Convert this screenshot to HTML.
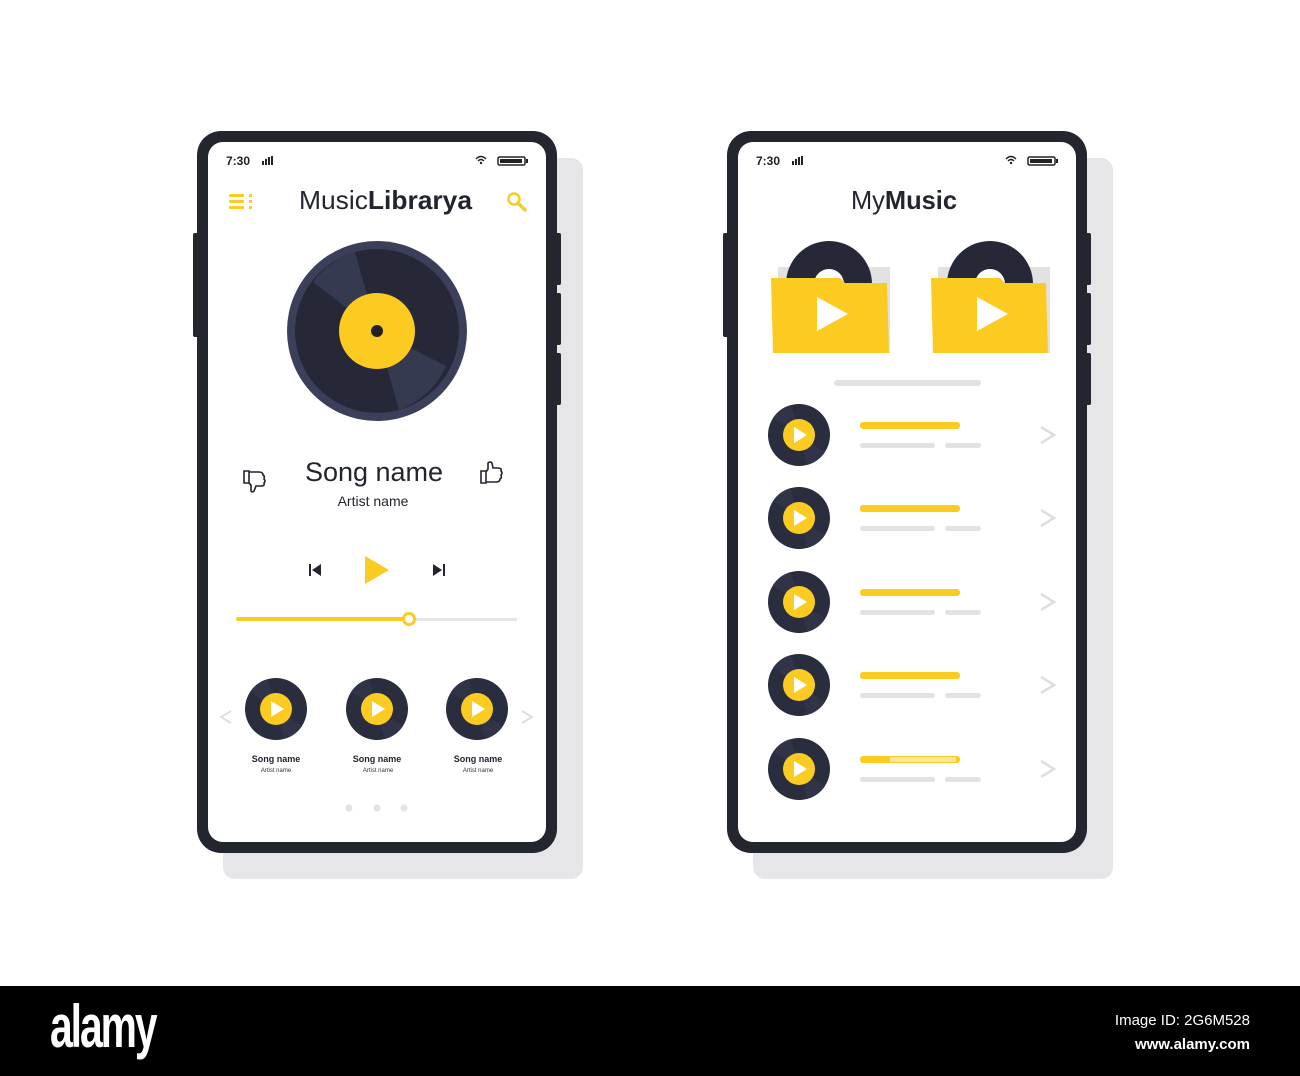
<!DOCTYPE html>
<html><head><meta charset="utf-8"><style>
html,body{margin:0;padding:0;background:#fff;}
body{width:1300px;height:1076px;position:relative;overflow:hidden;font-family:"Liberation Sans",sans-serif;}
svg{position:absolute;left:0;top:0}
.bar{position:absolute;left:0;top:986px;width:1300px;height:90px;background:#000;}
</style></head><body>
<svg width="1300" height="1076" viewBox="0 0 1300 1076" font-family="Liberation Sans, sans-serif">
<defs>
<g id="mini">
 <circle r="31" fill="#2a2d3d"/>
 <path d="M0 0 L-26 -17 A31 31 0 0 1 -8 -30 Z" fill="#313446"/>
 <path d="M0 0 L26 17 A31 31 0 0 1 8 30 Z" fill="#313446"/>
 <circle r="16" fill="#fccb22"/>
 <path d="M-5 -8 L8 0 L-5 8 Z" fill="#fff"/>
</g>
<g id="chev"><path d="M0 0 L13 8 L0 16" fill="none" stroke="#dedede" stroke-width="2.5"/></g>
</defs>

<!-- LEFT PHONE -->
<rect x="223" y="158" width="360" height="721" rx="12" fill="#e6e6e8"/>
<rect x="193" y="233" width="6" height="104" rx="2" fill="#24262f"/>
<rect x="555" y="233" width="6" height="52" rx="2" fill="#24262f"/>
<rect x="555" y="293" width="6" height="52" rx="2" fill="#24262f"/>
<rect x="555" y="353" width="6" height="52" rx="2" fill="#24262f"/>
<rect x="197" y="131" width="360" height="722" rx="24" fill="#24262f"/>
<rect x="208" y="142" width="338" height="700" rx="15" fill="#fff"/>
<text x="226" y="165" font-size="12" font-weight="bold" fill="#222">7:30</text>
<g fill="#222"><rect x="262" y="161" width="2" height="4"/><rect x="265" y="159" width="2" height="6"/><rect x="268" y="157" width="2" height="8"/><rect x="271" y="156" width="2" height="9"/></g>
<path d="M476 159 Q481 154 486 159 M478 161 Q481 158 484 161" fill="none" stroke="#222" stroke-width="1.3"/><circle cx="481" cy="163" r="1.2" fill="#222"/>
<rect x="498" y="157" width="27" height="8" rx="1.5" fill="none" stroke="#222" stroke-width="1.5"/><rect x="500" y="159" width="22" height="4" fill="#222"/><rect x="526" y="159" width="2" height="4" fill="#222"/>
<g fill="#fccb22"><rect x="229" y="194" width="15" height="3" rx="1"/><rect x="229" y="200" width="15" height="3" rx="1"/><rect x="229" y="206" width="15" height="3" rx="1"/><rect x="249" y="194" width="3" height="3"/><rect x="249" y="200" width="3" height="3"/><rect x="249" y="206" width="3" height="3"/></g>
<text x="299" y="209" font-size="26" fill="#22242f" textLength="173" lengthAdjust="spacingAndGlyphs">Music<tspan font-weight="bold">Librarya</tspan></text>
<circle cx="514" cy="199" r="5.5" fill="none" stroke="#fccb22" stroke-width="2.5"/><path d="M518 203 L525 210" stroke="#fccb22" stroke-width="3.5" stroke-linecap="round"/>
<!-- vinyl -->
<circle cx="377" cy="331" r="90" fill="#3c3f5a"/>
<circle cx="377" cy="331" r="82" fill="#262838"/>
<path d="M377 331 L313 282 A82 82 0 0 1 355 252 Z" fill="#363a50"/>
<path d="M377 331 L446 366 A82 82 0 0 1 399 410 Z" fill="#363a50"/>
<circle cx="377" cy="331" r="38" fill="#fccb22"/>
<circle cx="377" cy="331" r="6" fill="#222"/>
<text x="374" y="481" font-size="27" fill="#22242f" text-anchor="middle">Song name</text>
<text x="373" y="506" font-size="14" fill="#22242f" text-anchor="middle">Artist name</text>
<!-- thumbs -->
<path d="M244 471 h5 v12 h-5 z M249 472 h10 q4 0 4 3 q2 1 1 4 q2 2 0 4 q1 3-3 3 h-5 l-2 5 q-2 2-3 0 l0-6 l-2-2" fill="none" stroke="#22242f" stroke-width="1.6"/>
<path d="M481 471 h5 v12 h-5 z M486 482 h10 q4 0 4-3 q2-1 1-4 q2-2 0-4 q1-3-3-3 h-5 l-1-5 q-2-2-4 0 l0 6 l-2 3" fill="none" stroke="#22242f" stroke-width="1.6"/>
<!-- controls -->
<path d="M309 564 h2 v12 h-2z M321 564 v12 l-9 -6z" fill="#22242f"/>
<path d="M365 556 L389 570 L365 584 Z" fill="#fccb22"/>
<path d="M433 564 v12 l9 -6z M443 564 h2 v12 h-2z" fill="#22242f"/>
<rect x="236" y="617" width="173" height="4" rx="2" fill="#fccb22"/>
<rect x="409" y="618" width="108" height="3" fill="#e4e4e4"/>
<circle cx="409" cy="619" r="5.5" fill="#fff" stroke="#fccb22" stroke-width="3"/>
<!-- minis -->
<use href="#mini" x="276" y="709"/><use href="#mini" x="377" y="709"/><use href="#mini" x="477" y="709"/>
<path d="M231 711 L221 717 L231 723" fill="none" stroke="#dedede" stroke-width="2"/>
<path d="M522 711 L532 717 L522 723" fill="none" stroke="#dedede" stroke-width="2"/>
<g font-size="9" font-weight="bold" fill="#22242f" text-anchor="middle"><text x="276" y="762">Song name</text><text x="377" y="762">Song name</text><text x="478" y="762">Song name</text></g>
<g font-size="6" fill="#333" text-anchor="middle"><text x="276" y="772">Artist name</text><text x="378" y="772">Artist name</text><text x="478" y="772">Artist name</text></g>
<g fill="#e2e2e2"><circle cx="349" cy="808" r="3.5"/><circle cx="377" cy="808" r="3.5"/><circle cx="404" cy="808" r="3.5"/></g>

<!-- RIGHT PHONE -->
<rect x="753" y="158" width="360" height="721" rx="12" fill="#e6e6e8"/>
<rect x="723" y="233" width="6" height="104" rx="2" fill="#24262f"/>
<rect x="1085" y="233" width="6" height="52" rx="2" fill="#24262f"/>
<rect x="1085" y="293" width="6" height="52" rx="2" fill="#24262f"/>
<rect x="1085" y="353" width="6" height="52" rx="2" fill="#24262f"/>
<rect x="727" y="131" width="360" height="722" rx="24" fill="#24262f"/>
<rect x="738" y="142" width="338" height="700" rx="15" fill="#fff"/>
<text x="756" y="165" font-size="12" font-weight="bold" fill="#222">7:30</text>
<g fill="#222"><rect x="792" y="161" width="2" height="4"/><rect x="795" y="159" width="2" height="6"/><rect x="798" y="157" width="2" height="8"/><rect x="801" y="156" width="2" height="9"/></g>
<path d="M1006 159 Q1011 154 1016 159 M1008 161 Q1011 158 1014 161" fill="none" stroke="#222" stroke-width="1.3"/><circle cx="1011" cy="163" r="1.2" fill="#222"/>
<rect x="1028" y="157" width="27" height="8" rx="1.5" fill="none" stroke="#222" stroke-width="1.5"/><rect x="1030" y="159" width="22" height="4" fill="#222"/><rect x="1056" y="159" width="2" height="4" fill="#222"/>
<text x="851" y="209" font-size="26" fill="#22242f" textLength="106" lengthAdjust="spacingAndGlyphs">My<tspan font-weight="bold">Music</tspan></text>
<!-- folders -->
<g>
 <rect x="778" y="267" width="112" height="86" fill="#e2e2e2"/>
 <circle cx="829" cy="284" r="43" fill="#262838"/><circle cx="829" cy="284" r="15" fill="#fff"/>
 <path d="M771 278 L840 278 L845 283 L887 283 L889 353 L773 353 Z" fill="#fccb22"/>
 <path d="M817 297 L848 314 L817 331 Z" fill="#fff"/>
</g>
<g>
 <rect x="938" y="267" width="112" height="86" fill="#e2e2e2"/>
 <circle cx="990" cy="284" r="43" fill="#262838"/><circle cx="990" cy="284" r="15" fill="#fff"/>
 <path d="M931 278 L1000 278 L1005 283 L1046 283 L1048 353 L933 353 Z" fill="#fccb22"/>
 <path d="M977 297 L1008 314 L977 331 Z" fill="#fff"/>
</g>
<rect x="834" y="380" width="147" height="6" rx="3" fill="#e2e2e2"/>
<!-- list -->
<use href="#mini" x="799" y="435"/><rect x="860" y="422" width="100" height="7" rx="3" fill="#fccb22"/><rect x="860" y="443" width="75" height="5" rx="2.5" fill="#e2e2e2"/><rect x="945" y="443" width="36" height="5" rx="2.5" fill="#e2e2e2"/><use href="#chev" x="1041" y="427"/>
<use href="#mini" x="799" y="518"/><rect x="860" y="505" width="100" height="7" rx="3" fill="#fccb22"/><rect x="860" y="526" width="75" height="5" rx="2.5" fill="#e2e2e2"/><rect x="945" y="526" width="36" height="5" rx="2.5" fill="#e2e2e2"/><use href="#chev" x="1041" y="510"/>
<use href="#mini" x="799" y="602"/><rect x="860" y="589" width="100" height="7" rx="3" fill="#fccb22"/><rect x="860" y="610" width="75" height="5" rx="2.5" fill="#e2e2e2"/><rect x="945" y="610" width="36" height="5" rx="2.5" fill="#e2e2e2"/><use href="#chev" x="1041" y="594"/>
<use href="#mini" x="799" y="685"/><rect x="860" y="672" width="100" height="7" rx="3" fill="#fccb22"/><rect x="860" y="693" width="75" height="5" rx="2.5" fill="#e2e2e2"/><rect x="945" y="693" width="36" height="5" rx="2.5" fill="#e2e2e2"/><use href="#chev" x="1041" y="677"/>
<use href="#mini" x="799" y="769"/><rect x="860" y="756" width="100" height="7" rx="3" fill="#fccb22"/><rect x="890" y="757" width="66" height="5" fill="#fde79a"/><rect x="860" y="777" width="75" height="5" rx="2.5" fill="#e2e2e2"/><rect x="945" y="777" width="36" height="5" rx="2.5" fill="#e2e2e2"/><use href="#chev" x="1041" y="761"/>
</svg>
<div class="bar">
 <div style="position:absolute;left:50px;top:6px;color:#fff;font-size:60px;font-weight:bold;letter-spacing:-3px;transform:scaleX(0.68);transform-origin:left;">alamy</div>
 <div style="position:absolute;right:50px;top:23px;color:#fff;font-size:15px;text-align:right;line-height:24px;">Image ID: 2G6M528<br><b>www.alamy.com</b></div>
</div>
</body></html>
